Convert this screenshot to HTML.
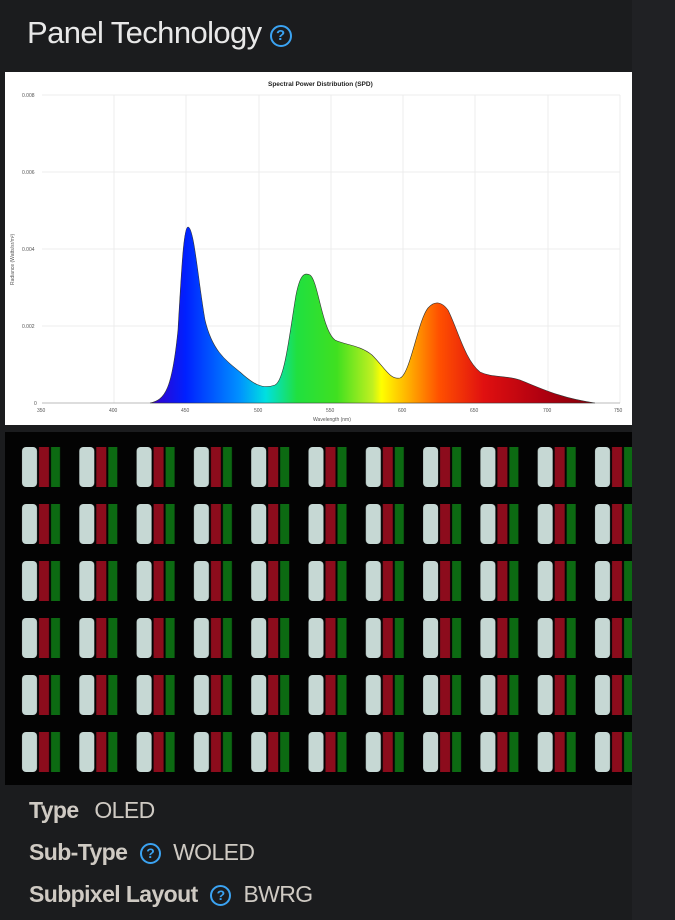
<!DOCTYPE html>
<html><head><meta charset="utf-8"><style>
html,body{margin:0;padding:0}
body{width:675px;height:920px;background:#202124;position:relative;overflow:hidden;font-family:"Liberation Sans",sans-serif}
.panel{position:absolute;left:0;top:0;width:632px;height:920px;background:#1b1c1e}
.title{position:absolute;left:27px;top:15px;font-size:31px;color:#e8e8e8;letter-spacing:-0.6px}
.q{display:inline-block;box-sizing:border-box;border:2px solid #3ba3f2;border-radius:50%;color:#3ba3f2;text-align:center;font-weight:bold}
.row{position:absolute;left:29px;font-size:23px;color:#cfcac3;letter-spacing:-0.6px}
.row b{margin-right:10px}
.row .q{width:21px;height:21px;font-size:14px;line-height:17px;vertical-align:2px;margin-right:12px;margin-left:-3px;letter-spacing:0}
</style></head><body>
<div class="panel"></div>
<div class="title">Panel Technology <span class="q" style="width:22px;height:22px;font-size:15px;line-height:18px;vertical-align:3px;letter-spacing:0">?</span></div>

<svg style="position:absolute;left:5px;top:72px" width="627" height="353" viewBox="5 72 627 353">
<defs>
<linearGradient id="sp" gradientUnits="userSpaceOnUse" x1="150" y1="0" x2="595" y2="0">
<stop offset="0" stop-color="#3a00c8"/>
<stop offset="0.08" stop-color="#0020ff"/>
<stop offset="0.2" stop-color="#0090ff"/>
<stop offset="0.26" stop-color="#00e0e0"/>
<stop offset="0.33" stop-color="#20e040"/>
<stop offset="0.42" stop-color="#40e020"/>
<stop offset="0.5" stop-color="#c0f020"/>
<stop offset="0.52" stop-color="#ffff00"/>
<stop offset="0.58" stop-color="#ffb000"/>
<stop offset="0.65" stop-color="#ff5000"/>
<stop offset="0.75" stop-color="#e01010"/>
<stop offset="0.88" stop-color="#b00010"/>
<stop offset="1" stop-color="#800008"/>
</linearGradient>
</defs>
<rect x="5" y="72" width="627" height="353" fill="#fff"/>
<g stroke="#ececec" stroke-width="1">
<line x1="42" y1="95" x2="620" y2="95"/><line x1="42" y1="172" x2="620" y2="172"/><line x1="42" y1="249" x2="620" y2="249"/><line x1="42" y1="326" x2="620" y2="326"/>
<line x1="114" y1="95" x2="114" y2="403"/><line x1="186" y1="95" x2="186" y2="403"/><line x1="259" y1="95" x2="259" y2="403"/><line x1="331" y1="95" x2="331" y2="403"/><line x1="403" y1="95" x2="403" y2="403"/><line x1="475" y1="95" x2="475" y2="403"/><line x1="548" y1="95" x2="548" y2="403"/><line x1="620" y1="95" x2="620" y2="403"/>
</g>
<line x1="42" y1="403" x2="620" y2="403" stroke="#bbb"/>
<path d="M150,403 C165,400 172,390 178,330 C182,260 184,227 188,227 C194,227 198,280 205,320 C212,350 225,360 240,372 C252,383 262,390 275,385 C285,380 290,330 296,295 C300,275 304,272 310,275 C318,280 322,330 335,340 C345,345 360,345 372,355 C385,368 390,380 400,378 C410,375 418,320 428,308 C435,300 442,302 448,310 C458,330 465,360 480,372 C492,378 505,375 520,380 C540,388 560,398 595,403 Z" fill="url(#sp)" stroke="#333" stroke-width="0.6"/>
<g font-size="5" fill="#555" font-family="Liberation Sans,sans-serif">
<text x="268" y="86" font-size="6.5" font-weight="bold" fill="#222">Spectral Power Distribution (SPD)</text>
<text x="22" y="97">0.008</text><text x="22" y="174">0.006</text><text x="22" y="251">0.004</text><text x="22" y="328">0.002</text><text x="34" y="405">0</text>
<text x="37" y="412">350</text><text x="109" y="412">400</text><text x="181" y="412">450</text><text x="254" y="412">500</text><text x="326" y="412">550</text><text x="398" y="412">600</text><text x="470" y="412">650</text><text x="543" y="412">700</text><text x="614" y="412">750</text>
<text x="313" y="421">Wavelength (nm)</text>
<text transform="translate(14,285) rotate(-90)">Radiance (Watts/sr/m²)</text>
</g>
</svg>

<svg style="position:absolute;left:5px;top:432px" width="627" height="353">
<defs>
<pattern id="px" patternUnits="userSpaceOnUse" x="0" y="0" width="57.3" height="57">
<rect x="17" y="15" width="15" height="40" rx="4" fill="#c6d8d4"/>
<rect x="34" y="15" width="10" height="40" fill="#8c0c1c"/>
<rect x="46" y="15" width="9" height="40" fill="#0c6a12"/>
</pattern>
</defs>
<rect width="627" height="353" fill="#030303"/>
<rect width="627" height="345" fill="url(#px)"/>
</svg>

<div class="row" style="top:797px"><b>Type</b> OLED</div>
<div class="row" style="top:839px"><b>Sub-Type</b> <span class="q">?</span>WOLED</div>
<div class="row" style="top:881px"><b>Subpixel Layout</b> <span class="q">?</span>BWRG</div>
</body></html>
